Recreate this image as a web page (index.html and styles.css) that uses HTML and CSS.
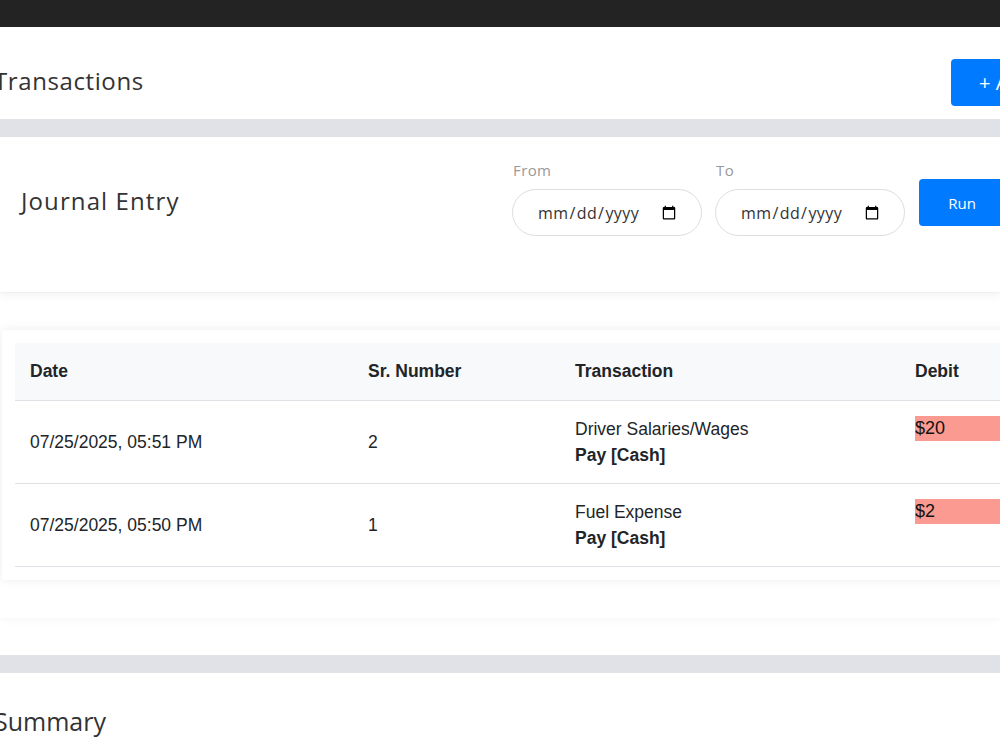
FILE: index.html
```html
<!DOCTYPE html>
<html lang="en">
<head>
  <meta charset="UTF-8" />
  <meta name="viewport" content="width=device-width, initial-scale=1.0">
  <title>Transactions</title>
  <link rel="stylesheet" href="styles.css">
</head>
<body>
  <div class="topbar"></div>

  <div class="page-header">
    <h1>Transactions</h1>
    <button class="btn btn-primary btn-add">+ Add Transaction</button>
  </div>

  <div class="divider"></div>

  <div class="filter-card">
    <h2>Journal Entry</h2>
    <div class="filters">
      <div class="field">
        <label for="fromDate">From</label>
        <input type="date" id="fromDate">
      </div>
      <div class="field">
        <label for="toDate">To</label>
        <input type="date" id="toDate">
      </div>
      <button class="btn btn-primary btn-run">Run</button>
    </div>
  </div>

  <div class="report-card">
    <div class="table-card">
      <table class="journal">
        <colgroup>
          <col class="col-date">
          <col class="col-sr">
          <col class="col-txn">
          <col class="col-amt">
          <col class="col-amt">
        </colgroup>
        <thead>
          <tr>
            <th>Date</th>
            <th>Sr. Number</th>
            <th>Transaction</th>
            <th>Debit</th>
            <th>Credit</th>
          </tr>
        </thead>
        <tbody>
          <tr>
            <td>07/25/2025, 05:51 PM</td>
            <td>2</td>
            <td>Driver Salaries/Wages<br><strong>Pay [Cash]</strong></td>
            <td class="amt"><div class="debit">$20</div></td>
            <td class="amt"></td>
          </tr>
          <tr>
            <td>07/25/2025, 05:50 PM</td>
            <td>1</td>
            <td>Fuel Expense<br><strong>Pay [Cash]</strong></td>
            <td class="amt"><div class="debit">$2</div></td>
            <td class="amt"></td>
          </tr>
        </tbody>
      </table>
    </div>
  </div>

  <div class="spacer"></div>
  <div class="divider"></div>

  <div class="summary">
    <h2>Summary</h2>
  </div>
</body>
</html>
```

FILE: styles.css
```css
body {
  margin: 0;
  background: white;
  color: #333;
  font-family: "Open Sans", Arial, sans-serif;
  overflow-x: hidden;
}
.topbar {
  height: 27px;
  background: #232323;
}
.page-header {
  height: 92px;
  box-sizing: border-box;
  display: flex;
  align-items: flex-start;
  padding-top: 32px;
  background: white;
}
.page-header h1 {
  flex: 1;
  margin: 5px 0 0 -6px;
  font-size: 24px;
  line-height: 34px;
  font-weight: 400;
  letter-spacing: 0.6px;
  color: #333;
}
.btn {
  border: none;
  border-radius: 4px;
  cursor: pointer;
  font-family: "Open Sans", Arial, sans-serif;
  font-size: 15px;
  white-space: nowrap;
}
.btn-primary {
  background: #007bff;
  color: white;
}
.btn-add {
  flex: none;
  width: 170px;
  height: 47px;
  margin-right: -121px;
  padding: 0 0 0 28px;
  text-align: left;
  font-size: 20px;
}
.divider {
  height: 18px;
  background: #e1e2e7;
}
.filter-card {
  height: 155px;
  box-sizing: border-box;
  display: flex;
  align-items: center;
  padding: 0 0 28px 21px;
  background: white;
  box-shadow: 0 4px 8px rgba(0, 0, 0, 0.05);
  position: relative;
}
.filter-card h2 {
  flex: 0 0 491px;
  margin: 0;
  font-size: 24px;
  line-height: 32px;
  font-weight: 400;
  letter-spacing: 1.1px;
  color: #333;
}
.filters {
  flex: none;
  display: flex;
  align-items: center;
  margin-bottom: 4px;
}
.field {
  display: flex;
  flex-direction: column;
  margin-right: 13px;
}
.field label {
  font-size: 15px;
  line-height: 19px;
  color: #999;
  margin: 0 0 9px 1px;
  letter-spacing: 0.4px;
}
.field input {
  width: 190px;
  height: 47px;
  box-sizing: border-box;
  border: 1px solid #ddd;
  border-radius: 24px;
  padding: 0 22px 0 24px;
  font-family: "Open Sans", Arial, sans-serif;
  font-size: 16px;
  letter-spacing: 0.4px;
  color: #333;
  background: white;
}
.btn-run {
  width: 86px;
  height: 47px;
  margin: 8px 0 0 1px;
}
.report-card {
  margin-top: 1px;
  padding: 37px 0 38px 2px;
  background: white;
  box-shadow: 0 0 10px rgba(0, 0, 0, 0.06);
}
.table-card {
  width: 1225px;
  padding: 13px;
  background: white;
  box-shadow: 0 0 10px rgba(0, 0, 0, 0.08);
}
.journal {
  width: 1225px;
  table-layout: fixed;
  border-collapse: collapse;
  font-family: "Liberation Sans", Arial, sans-serif;
  font-size: 17.5px;
  color: #212529;
}
.col-date { width: 338px; }
.col-sr { width: 207px; }
.col-txn { width: 340px; }
.col-amt { width: 170px; }
.journal th,
.journal td {
  padding: 15px;
  line-height: 26px;
  text-align: left;
  vertical-align: middle;
  border-bottom: 1px solid #dee2e6;
}
.journal th {
  padding: 16px 15px;
  background: #f8f9fa;
  font-weight: 700;
  line-height: 25px;
}
.journal strong {
  font-weight: 700;
}
.journal td.amt {
  vertical-align: top;
  padding-right: 0;
}
.debit {
  background: #fa9a90;
  color: #111;
  font-size: 18px;
  line-height: 25px;
}
.spacer {
  height: 37px;
}
.summary {
  padding: 31px 0 40px;
}
.summary h2 {
  margin: 0 0 0 -6px;
  font-size: 25px;
  line-height: 34px;
  font-weight: 400;
  color: #333;
}
```
